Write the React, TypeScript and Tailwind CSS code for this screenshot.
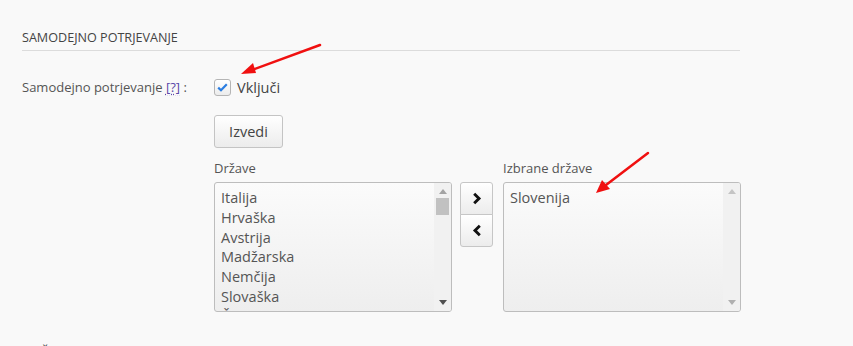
import React from "react";

const font = { fontFamily: '"Open Sans", "DejaVu Sans", sans-serif' };

function ListBox({ items, thumb }: { items: string[]; thumb: boolean }) {
  return (
    <div className="relative w-[238px] h-[130px] rounded-[3px] border border-[#bdbdbd] bg-gradient-to-b from-[#fbfbfb] to-[#eeeeee] overflow-hidden flex">
      <div className="flex-1 pl-[6px] pt-[5px] text-[14.5px] leading-[19.8px] text-[#555]">
        {items.map((t) => (
          <div key={t} className="whitespace-nowrap">{t}</div>
        ))}
      </div>
      <div className="w-[17px] h-full bg-[#f1f1f1] flex flex-col items-center justify-between py-[6px]">
        <svg width="8" height="5" viewBox="0 0 8 5">
          <path d="M0 5 L4 0 L8 5 Z" fill={thumb ? "#a3a3a3" : "#c4c4c4"} />
        </svg>
        <div className="flex-1 w-full flex flex-col items-center pt-[4px]">
          {thumb && <div className="w-[13px] h-[17px] bg-[#c1c1c1]" />}
        </div>
        <svg width="8" height="5" viewBox="0 0 8 5">
          <path d="M0 0 L8 0 L4 5 Z" fill={thumb ? "#505050" : "#b0b0b0"} />
        </svg>
      </div>
    </div>
  );
}

function ArrowBtn({ dir, cls }: { dir: "r" | "l"; cls: string }) {
  return (
    <div className={`w-[33px] h-[33px] border border-[#c6c6c6] bg-gradient-to-b from-[#ffffff] to-[#ececec] flex items-center justify-center ${cls}`}>
      <svg width="10" height="13" viewBox="0 0 10 13">
        {dir === "r" ? (
          <path d="M2.2 1.8 L7 6.5 L2.2 11.2" stroke="#111" strokeWidth="2.9" fill="none" strokeLinejoin="miter" />
        ) : (
          <path d="M7.8 1.8 L3 6.5 L7.8 11.2" stroke="#111" strokeWidth="2.9" fill="none" strokeLinejoin="miter" />
        )}
      </svg>
    </div>
  );
}

export default function App() {
  return (
    <div className="relative w-[853px] h-[346px] overflow-hidden bg-[#f9f9f9] text-[#444]" style={font}>
      <div className="pl-[22px] pt-[30px]">
        <div className="w-[718px] border-b border-[#dcdcdc] pb-[4px] text-[12.6px] leading-[16px] text-[#444]">
          SAMODEJNO POTRJEVANJE
        </div>

        <div className="mt-[28px] flex items-center h-[17px]">
          <div className="w-[192px] text-[13px] leading-[17px] text-[#555] whitespace-nowrap">
            Samodejno potrjevanje{" "}
            <span className="text-[#5a48a8] underline decoration-dotted underline-offset-2">[?]</span> :
          </div>
          <div className="w-[17px] h-[17px] rounded-[3px] border border-[#b5b5b5] bg-gradient-to-b from-white to-[#ececec] flex items-center justify-center">
            <svg width="11" height="9" viewBox="0 0 11 9">
              <path d="M1.2 4.6 L4 7.3 L9.8 1.3" stroke="#2a7de1" strokeWidth="2.2" fill="none" />
            </svg>
          </div>
          <span className="ml-[6px] text-[14.5px] leading-[17px] text-[#444]">Vključi</span>
        </div>

        <div className="mt-[19px] pl-[192px]">
          <div className="w-[69px] h-[33px] rounded-[3px] border border-[#c4c4c4] bg-gradient-to-b from-white to-[#ececec] flex items-center justify-center text-[14.5px] text-[#444]">
            Izvedi
          </div>
        </div>

        <div className="mt-[12px] pl-[192px] flex">
          <div className="flex flex-col">
            <div className="text-[13px] leading-[16px] mb-[6px] text-[#555]">Države</div>
            <ListBox
              thumb
              items={["Italija", "Hrvaška", "Avstrija", "Madžarska", "Nemčija", "Slovaška", "Češka republika"]}
            />
          </div>
          <div className="ml-[8px] pt-[22px] flex flex-col">
            <ArrowBtn dir="r" cls="rounded-t-[3px]" />
            <ArrowBtn dir="l" cls="rounded-b-[3px] -mt-px" />
          </div>
          <div className="ml-[10px] flex flex-col">
            <div className="text-[13px] leading-[16px] mb-[6px] text-[#555]">Izbrane države</div>
            <ListBox thumb={false} items={["Slovenija"]} />
          </div>
        </div>

        <div className="mt-[32px] text-[13px] leading-[16px] text-[#444]">ROČNO POTRJEVANJE</div>
      </div>

      <svg className="absolute left-0 top-0 pointer-events-none" width="853" height="346">
        <line x1="320" y1="45" x2="252" y2="70" stroke="#f01010" strokeWidth="2.5" strokeLinecap="round" />
        <path d="M241 74 L253 63 L256 73 Z" fill="#f01010" />
        <line x1="648" y1="153" x2="606" y2="185" stroke="#f01010" strokeWidth="2.5" strokeLinecap="round" />
        <path d="M596 193 L602 180 L610 189 Z" fill="#f01010" />
      </svg>
    </div>
  );
}
